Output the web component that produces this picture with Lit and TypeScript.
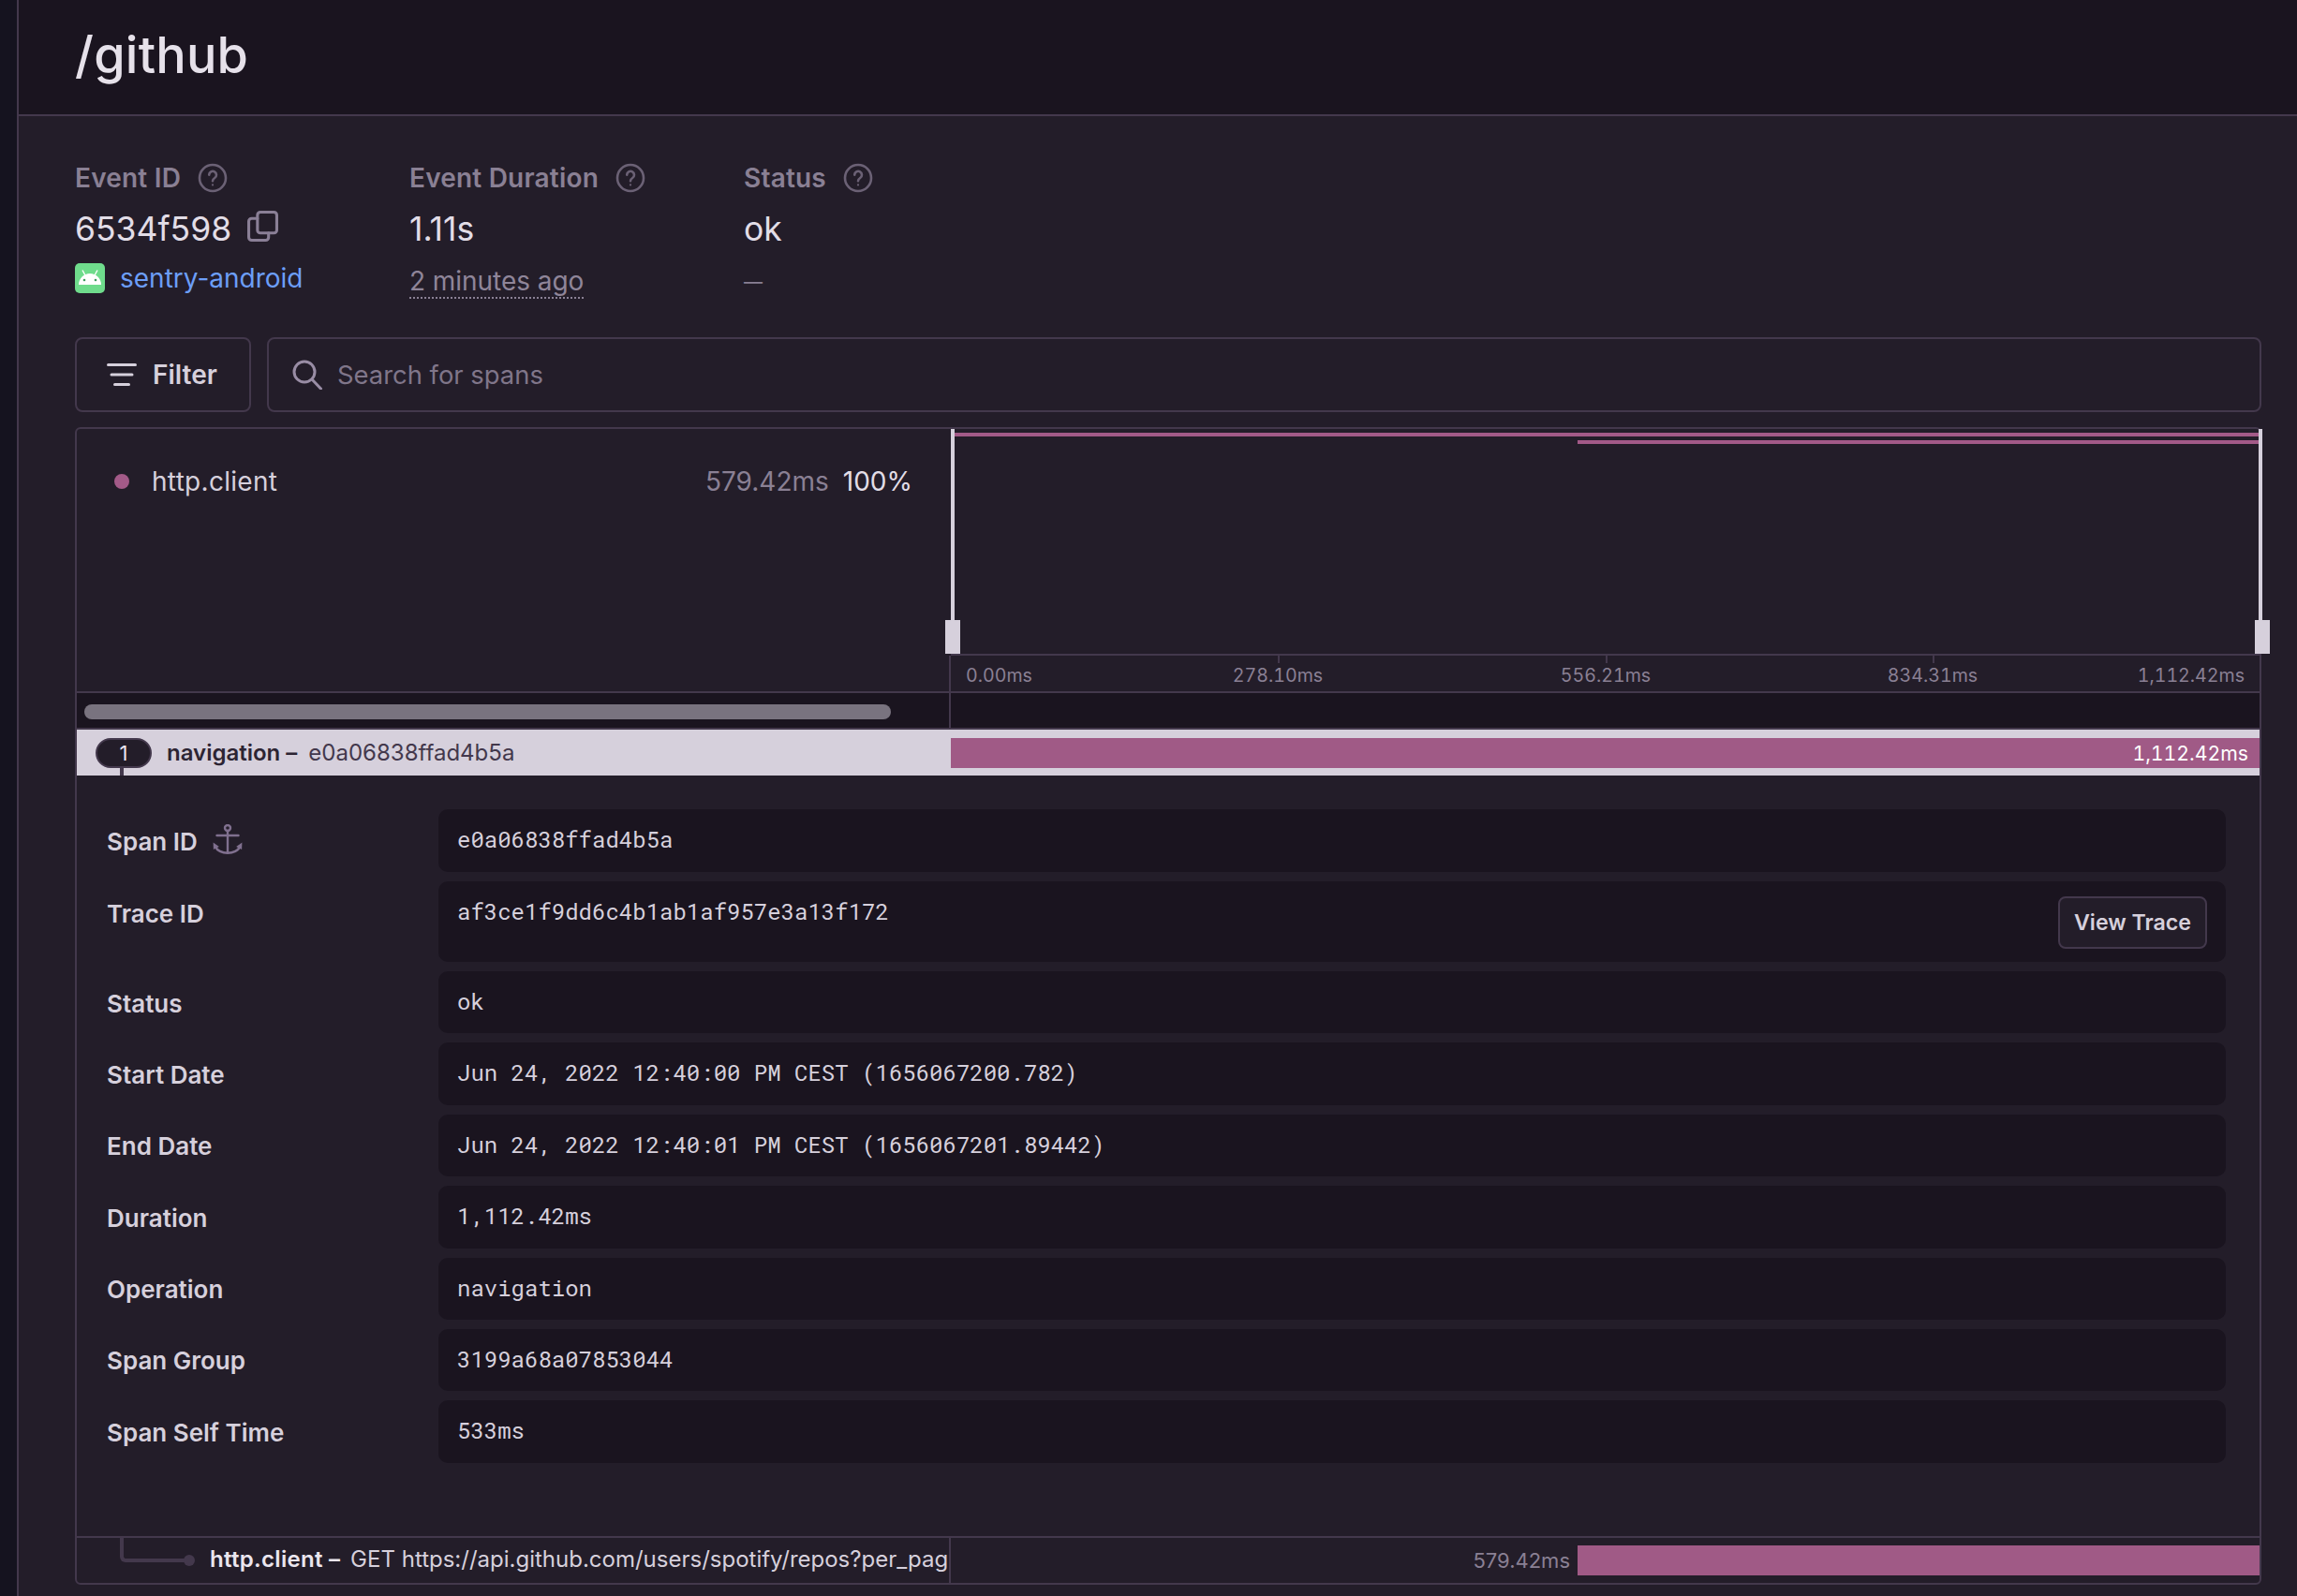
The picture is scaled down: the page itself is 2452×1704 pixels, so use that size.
import { LitElement, html, css, svg } from "lit";
import { customElement } from "lit/decorators.js";

const help = html`<svg class="help" viewBox="0 0 32 32" fill="none" stroke="#6b6175" stroke-width="2.6" stroke-linecap="round"><circle cx="16" cy="16" r="14"/><path d="M12.2 12.6a3.9 3.9 0 1 1 6 3.4c-1.3.8-2.2 1.5-2.2 3.2"/><circle cx="16" cy="23.4" r="1.1" fill="#6b6175" stroke="none"/></svg>`;

const rows: { label: string; value: string }[] = [
  { label: "Status", value: "ok" },
  { label: "Start Date", value: "Jun 24, 2022 12:40:00 PM CEST (1656067200.782)" },
  { label: "End Date", value: "Jun 24, 2022 12:40:01 PM CEST (1656067201.89442)" },
  { label: "Duration", value: "1,112.42ms" },
  { label: "Operation", value: "navigation" },
  { label: "Span Group", value: "3199a68a07853044" },
  { label: "Span Self Time", value: "533ms" },
];

const ticks = [
  { x: 349, label: "278.10ms" },
  { x: 699, label: "556.21ms" },
  { x: 1048, label: "834.31ms" },
];

@customElement("app-root")
export class AppRoot extends LitElement {
  static styles = css`
    :host {
      display: flex;
      width: 2452px;
      height: 1704px;
      overflow: hidden;
      background: #16142a;
      font-family: Inter, "Open Sans", sans-serif;
      color: #d6d0dc;
    }
    * { box-sizing: border-box; }
    .gutter { width: 18px; flex: none; background: #15131f; border-right: 0; }
    .main { flex: 1; min-width: 0; background: #231d29; border-left: 2px solid #43384c; }
    .head {
      height: 124px;
      background: #1a141f;
      border-bottom: 2px solid #43384c;
      padding-left: 60px;
      display: flex;
      align-items: flex-start;
    }
    .head h1 {
      margin: 27px 0 0;
      font-size: 54px;
      line-height: 64px;
      font-weight: 500;
      color: #e6e1ea;
      letter-spacing: 0.2px;
    }
    .body { padding: 46px 38px 0 60px; }
    .meta { display: grid; grid-template-columns: 357px 357px 357px; }
    .mlabel {
      height: 40px;
      display: flex;
      align-items: center;
      gap: 18px;
      font-size: 28px;
      font-weight: 600;
      letter-spacing: 0.2px;
      color: #8a8094;
    }
    .help { width: 32px; height: 32px; flex: none; }
    .mvalue {
      margin-top: 10px;
      height: 50px;
      display: flex;
      align-items: center;
      gap: 17px;
      font-size: 35.5px;
      line-height: 50px;
      color: #e2dde7;
    }
    .copy { width: 33px; height: 33px; margin-top: -8px; }
    .msub {
      margin-top: 7px;
      height: 40px;
      display: flex;
      align-items: center;
      gap: 16px;
      font-size: 28px;
      color: #8a8094;
    }
    .link { color: #6c9ef8; }
    .android { width: 32px; height: 32px; flex: none; margin-top: 0; }
    .ago {
      margin-top: 8px;
      line-height: 34px;
      border-bottom: 2px dotted #8a8094;
      color: #8f8599;
      letter-spacing: -0.05px;
    }
    .dash { margin-top: 8px; color: #8a8094; font-size: 20px; }

    .tools { display: flex; gap: 17px; margin-top: 43px; height: 80px; }
    .filter {
      width: 188px;
      border: 2px solid #43384c;
      border-radius: 8px;
      display: flex;
      align-items: center;
      padding-left: 32px;
      gap: 17px;
      font-size: 28px;
      font-weight: 600;
      color: #d6d0dc;
    }
    .filter svg { width: 32px; height: 32px; flex: none; }
    .search {
      flex: 1;
      border: 2px solid #43384c;
      border-radius: 8px;
      display: flex;
      align-items: center;
      padding-left: 25px;
      gap: 16px;
      font-size: 27.4px;
      color: #80768a;
    }
    .search svg { width: 32px; height: 32px; flex: none; }

    .box {
      margin-top: 16px;
      height: 1236px;
      border: 2px solid #43384c;
      border-radius: 6px;
      display: flex;
      flex-direction: column;
    }
    .mini {
      height: 282px;
      flex: none;
      border-bottom: 2px solid #43384c;
      display: flex;
    }
    .legend {
      width: 933px;
      flex: none;
      padding: 36px 41px 0 40px;
      display: flex;
      align-items: center;
      align-self: flex-start;
      font-size: 28px;
      line-height: 40px;
    }
    .dot { width: 16px; height: 16px; border-radius: 50%; background: #a35a88; flex: none; }
    .lname { margin-left: 24px; flex: 1; color: #d6d0dc; letter-spacing: 0.3px; }
    .lms { color: #8a8094; }
    .lpc { margin-left: 15px; color: #e2dde7; }
    .chart { flex: 1; min-width: 0; display: flex; flex-direction: column; }
    .canvas { height: 242px; position: relative; border-bottom: 2px solid #43384c; flex: none; }
    .mbar { position: absolute; height: 4px; background: #a35a88; right: 0; }
    .vline { position: absolute; top: 0; width: 4px; height: 240px; background: #d6d0dc; }
    .handle { position: absolute; top: 204px; width: 16px; height: 36px; background: #d6d0dc; }
    .axis { flex: 1; position: relative; border-left: 2px solid #43384c; margin-left: -2px; }
    .tick { position: absolute; top: 0; width: 2px; height: 8px; background: #43384c; }
    .tlabel {
      position: absolute;
      top: 7px;
      font-size: 19.6px;
      line-height: 28px;
      color: #8a8094;
      white-space: nowrap;
      font-variant-numeric: tabular-nums;
    }
    .tlabel.c { transform: translateX(-50%); }

    .scroll {
      height: 39px;
      flex: none;
      background: #1a141f;
      border-bottom: 2px solid #43384c;
      display: flex;
    }
    .sleft { width: 933px; flex: none; padding: 12px 0 0 8px; border-right: 2px solid #43384c; }
    .thumb { width: 861px; height: 16px; border-radius: 8px; background: #79737f; }

    .nav {
      height: 49px;
      flex: none;
      background: #d6d0dc;
      position: relative;
      display: flex;
      align-items: center;
    }
    .name {
      width: 933px;
      flex: none;
      display: flex;
      align-items: center;
      padding-left: 20px;
      font-size: 24px;
      white-space: nowrap;
      overflow: hidden;
    }
    .pill {
      width: 60px;
      height: 32px;
      border-radius: 16px;
      background: #231d29;
      border: 2px solid #43384c;
      color: #ebe6ef;
      font-size: 22px;
      line-height: 28px;
      text-align: center;
      flex: none;
      margin-right: 16px;
    }
    .nav b { font-weight: 600; color: #2c2433; }
    .nav span.id { color: #43384c; margin-left: 12px; }
    .stub { position: absolute; left: 46px; top: 41px; width: 4px; height: 8px; background: #43384c; }
    .navbar {
      flex: 1;
      height: 32px;
      background: #a05a86;
      color: #fff;
      font-size: 21.2px;
      line-height: 32px;
      text-align: right;
      padding-right: 12px;
      font-variant-numeric: tabular-nums;
    }

    .details {
      height: 812px;
      flex: none;
      padding: 36px 36px 0 32px;
      display: flex;
      flex-direction: column;
      gap: 10px;
    }
    .row { display: flex; height: 66.4px; flex: none; }
    .row.first { height: 67px; }
    .row.tall { height: 86px; }
    .rlabel {
      width: 354px;
      flex: none;
      display: flex;
      align-items: center;
      gap: 16px;
      height: 68px;
      font-size: 26px;
      font-weight: 600;
      color: #d6d0dc;
    }
    .rlabel svg { width: 32px; height: 32px; margin-top: -4px; }
    .rvalue {
      flex: 1;
      min-width: 0;
      background: #1a141f;
      border-radius: 10px;
      padding: 0 20px;
      display: flex;
      justify-content: space-between;
      align-items: flex-start;
      font-family: "Roboto Mono", "DejaVu Sans Mono", "Liberation Mono", monospace;
      font-size: 24px;
      line-height: 64px;
      color: #d6d0dc;
      white-space: pre;
    }
    .btn {
      margin-top: 16px;
      width: 159px;
      height: 56px;
      border: 2px solid #43384c;
      border-radius: 8px;
      background: #231d29;
      font-family: Inter, sans-serif;
      font-size: 23.2px;
      font-weight: 600;
      line-height: 52px;
      text-align: center;
      color: #d6d0dc;
    }

    .border { border-top: 2px solid #43384c; height: 50px; flex: none; position: relative; display: flex; }
    .sub {
      flex: none;
      padding-left: 142px;
      height: 48px;
      line-height: 46px;
      font-size: 24px;
      white-space: nowrap;
      overflow: hidden;
      border-right: 2px solid #43384c;
      color: #d6d0dc;
      width: 933px;
    }
    .sub b { font-weight: 600; color: #ebe6ef; letter-spacing: 0.3px; margin-right: 4px; }
    .elbow {
      position: absolute;
      left: 46px;
      top: 0;
      width: 70px;
      height: 26px;
      border-left: 4px solid #43384c;
      border-bottom: 4px solid #43384c;
      border-bottom-left-radius: 6px;
    }
    .knob { position: absolute; left: 114px; top: 18px; width: 12px; height: 12px; border-radius: 50%; background: #43384c; }
    .subright { flex: 1; display: flex; justify-content: flex-end; padding-top: 8px; }
    .subms { font-size: 22px; line-height: 32px; color: #8a8094; margin-right: 8px; }
    .subbar { width: 728px; height: 32px; background: #a05a86; }
  `;

  render() {
    return html`
      <div class="gutter"></div>
      <div class="main">
        <div class="head"><h1>/github</h1></div>
        <div class="body">
          <div class="meta">
            <div>
              <div class="mlabel">Event ID ${help}</div>
              <div class="mvalue">6534f598
                <svg class="copy" viewBox="0 0 32 32" fill="none" stroke="#8a7f96" stroke-width="3" stroke-linejoin="round" stroke-linecap="round"><rect x="10.5" y="1.5" width="20" height="21.5" rx="3"/><path d="M10.5 8H4.5a3 3 0 0 0-3 3v16.5a3 3 0 0 0 3 3H19a3 3 0 0 0 3-3V23"/></svg>
              </div>
              <div class="msub link">
                <svg class="android" viewBox="0 0 32 32"><rect width="32" height="32" rx="5" fill="#6fdc8c"/><path d="M4 23C4 16 9.5 11 16 11s12 5 12 12z" fill="#fff"/><path d="M8 7.500l3 5.500M24 7.500l-3 5.500" stroke="#fff" stroke-width="1.4"/><circle cx="10" cy="18" r="1.3" fill="#3d9c5c"/><circle cx="22" cy="18" r="1.3" fill="#3d9c5c"/></svg>
                sentry-android
              </div>
            </div>
            <div>
              <div class="mlabel">Event Duration ${help}</div>
              <div class="mvalue">1.11s</div>
              <div class="msub"><span class="ago">2 minutes ago</span></div>
            </div>
            <div>
              <div class="mlabel">Status ${help}</div>
              <div class="mvalue">ok</div>
              <div class="msub"><span class="dash">—</span></div>
            </div>
          </div>

          <div class="tools">
            <div class="filter">
              <svg viewBox="0 0 32 32" fill="none" stroke="#d6d0dc" stroke-width="3" stroke-linecap="round"><path d="M1.500 5.500h29M5 16h22M8.500 26.500h15"/></svg>
              Filter
            </div>
            <div class="search">
              <svg viewBox="0 0 32 32" fill="none" stroke="#998da5" stroke-width="3" stroke-linecap="round"><circle cx="13" cy="13" r="11"/><path d="M21 21l9.500 10"/></svg>
              Search for spans
            </div>
          </div>

          <div class="box">
            <div class="mini">
              <div class="legend">
                <span class="dot"></span>
                <span class="lname">http.client</span>
                <span class="lms">579.42ms</span>
                <span class="lpc">100%</span>
              </div>
              <div class="chart">
                <div class="canvas">
                  <div class="mbar" style="top:4px;left:4px"></div>
                  <div class="mbar" style="top:12px;left:669px"></div>
                  <div class="vline" style="left:0"></div>
                  <div class="vline" style="right:-3px"></div>
                  <div class="handle" style="left:-6px"></div>
                  <div class="handle" style="right:-11px"></div>
                </div>
                <div class="axis">
                  <span class="tlabel" style="left:16px">0.00ms</span>
                  ${ticks.map(
                    (t) => html`<div class="tick" style="left:${t.x}px"></div>
                      <span class="tlabel c" style="left:${t.x}px">${t.label}</span>`
                  )}
                  <span class="tlabel" style="right:16px">1,112.42ms</span>
                </div>
              </div>
            </div>

            <div class="scroll">
              <div class="sleft"><div class="thumb"></div></div>
            </div>

            <div class="nav">
              <div class="name">
                <span class="pill">1</span>
                <b>navigation –</b><span class="id">e0a06838ffad4b5a</span>
              </div>
              <div class="navbar">1,112.42ms</div>
              <div class="stub"></div>
            </div>

            <div class="details">
              <div class="row first">
                <div class="rlabel">Span ID
                  <svg viewBox="0 0 32 32" fill="none" stroke="#80708f" stroke-width="2.4" stroke-linecap="round">
                    ${svg`<circle cx="16" cy="4" r="3"/><path d="M16 7v24M4.500 12h23M3 24c1.500 4 7 6.800 13 6.800S27.500 28 29 24"/><path d="M.6 19.500l.3 7.500 6-3z" fill="#80708f" stroke="none"/><path d="M31.400 19.500l-.3 7.500-6-3z" fill="#80708f" stroke="none"/>`}
                  </svg>
                </div>
                <div class="rvalue">e0a06838ffad4b5a</div>
              </div>
              <div class="row tall">
                <div class="rlabel">Trace ID</div>
                <div class="rvalue">af3ce1f9dd6c4b1ab1af957e3a13f172<span class="btn">View Trace</span></div>
              </div>
              ${rows.map(
                (r) => html`<div class="row">
                  <div class="rlabel">${r.label}</div>
                  <div class="rvalue">${r.value}</div>
                </div>`
              )}
            </div>

            <div class="border">
              <div class="elbow"></div>
              <div class="knob"></div>
              <div class="sub"><b>http.client –</b> GET https://api.github.com/users/spotify/repos?per_pag</div>
              <div class="subright">
                <span class="subms">579.42ms</span>
                <div class="subbar"></div>
              </div>
            </div>
          </div>
        </div>
      </div>
    `;
  }
}
